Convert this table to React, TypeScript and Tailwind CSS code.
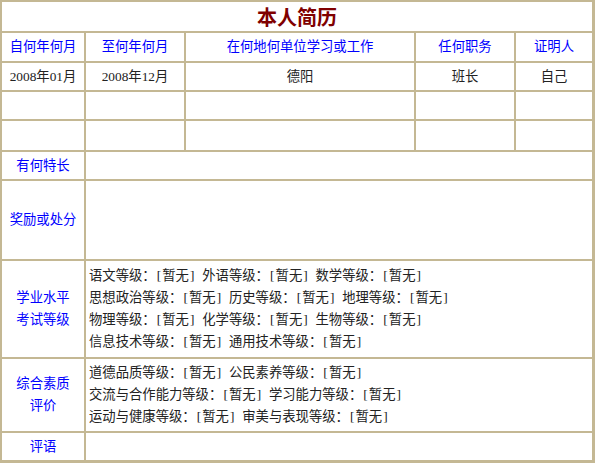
import React from "react";

const B = ({ children }: { children: React.ReactNode }) => (
  <span className="inline-block w-[6.67px] text-center">{children}</span>
);

const Item = ({ label }: { label: string }) => (
  <span className="mr-[6.67px]">
    {label}：<B>[</B>暂无<B>]</B>
  </span>
);

const Line = ({ items }: { items: string[] }) => (
  <div className="whitespace-nowrap">
    {items.map((it) => (
      <Item key={it} label={it} />
    ))}
  </div>
);

export default function App() {
  const cell = "bg-white flex items-center justify-center";
  const label = "bg-white flex flex-col items-center justify-center text-[#0000ff] text-center";
  return (
    <div className="w-[597px] h-[466px] bg-white font-['Liberation_Serif','Noto_Sans_CJK_SC',serif] text-[13.33px] leading-[22px] text-[#222]">
      <div className="w-[595px] grid grid-cols-[82px_98px_228px_98px_1fr] grid-rows-[29px_28px_27px_27px_29px_27px_78px_96px_72px_27px] gap-[2px] bg-[#c4b894] pt-[2px] pl-[2px] pr-[3px] pb-[3px]">
        <div className={`${cell} col-span-5 pt-[2px]`}>
          <span className="text-[20px] leading-[24px] font-bold text-[#800000]">本人简历</span>
        </div>

        <div className={`${cell} text-[#0000ff]`}>自何年何月</div>
        <div className={`${cell} text-[#0000ff]`}>至何年何月</div>
        <div className={`${cell} text-[#0000ff]`}>在何地何单位学习或工作</div>
        <div className={`${cell} text-[#0000ff]`}>任何职务</div>
        <div className={`${cell} text-[#0000ff]`}>证明人</div>

        <div className={cell}>2008年01月</div>
        <div className={cell}>2008年12月</div>
        <div className={cell}>德阳</div>
        <div className={cell}>班长</div>
        <div className={cell}>自己</div>

        <div className={cell}></div>
        <div className={cell}></div>
        <div className={cell}></div>
        <div className={cell}></div>
        <div className={cell}></div>

        <div className={cell}></div>
        <div className={cell}></div>
        <div className={cell}></div>
        <div className={cell}></div>
        <div className={cell}></div>

        <div className={label}>有何特长</div>
        <div className="bg-white col-span-4"></div>

        <div className={label}>奖励或处分</div>
        <div className="bg-white col-span-4"></div>

        <div className={label}>
          <div>学业水平</div>
          <div>考试等级</div>
        </div>
        <div className="bg-white col-span-4 flex flex-col justify-center pl-[3px]">
          <Line items={["语文等级", "外语等级", "数学等级"]} />
          <Line items={["思想政治等级", "历史等级", "地理等级"]} />
          <Line items={["物理等级", "化学等级", "生物等级"]} />
          <Line items={["信息技术等级", "通用技术等级"]} />
        </div>

        <div className={label}>
          <div>综合素质</div>
          <div>评价</div>
        </div>
        <div className="bg-white col-span-4 flex flex-col justify-center pl-[3px]">
          <Line items={["道德品质等级", "公民素养等级"]} />
          <Line items={["交流与合作能力等级", "学习能力等级"]} />
          <Line items={["运动与健康等级", "审美与表现等级"]} />
        </div>

        <div className={label}>评语</div>
        <div className="bg-white col-span-4"></div>
      </div>
    </div>
  );
}
